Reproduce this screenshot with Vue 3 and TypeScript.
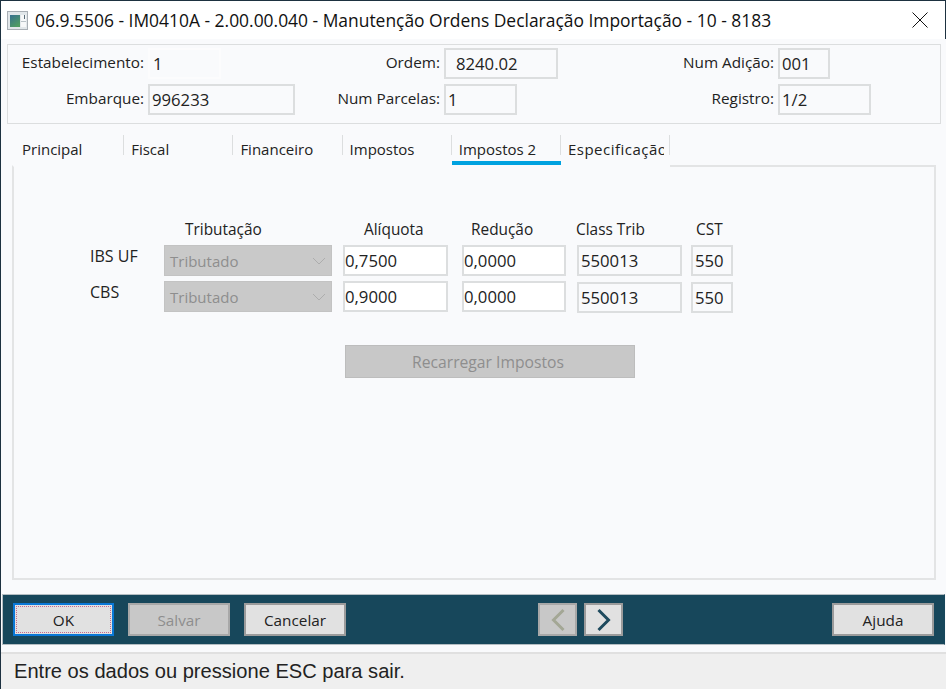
<script setup lang="ts">
interface HeaderField { label: string; value: string; width: number; cls?: string }
const headerFields: HeaderField[] = [
  { label: 'Estabelecimento:', value: '1', width: 73, cls: 'plain' },
  { label: 'Ordem:', value: '8240.02', width: 114, cls: 'indent' },
  { label: 'Num Adição:', value: '001', width: 52 },
  { label: 'Embarque:', value: '996233', width: 147 },
  { label: 'Num Parcelas:', value: '1', width: 73 },
  { label: 'Registro:', value: '1/2', width: 93 },
]
const tabs = ['Principal', 'Fiscal', 'Financeiro', 'Impostos', 'Impostos 2', 'Especificação']
const heads = ['Tributação', 'Alíquota', 'Redução', 'Class Trib', 'CST']
const rows = [
  { label: 'IBS UF', rate: '0,7500', red: '0,0000', cls: '550013', cst: '550' },
  { label: 'CBS', rate: '0,9000', red: '0,0000', cls: '550013', cst: '550' },
]
</script>

<template>
  <div class="window">
    <header class="titlebar">
      <svg class="appicon" width="21" height="19" viewBox="0 0 21 19">
        <defs>
          <linearGradient id="ig" x1="0" y1="0" x2="0.6" y2="1">
            <stop offset="0" stop-color="#37708f" />
            <stop offset="1" stop-color="#4f9c63" />
          </linearGradient>
        </defs>
        <rect x="0.5" y="0.5" width="20" height="18" fill="#e2e7ea" stroke="#a9afb5" />
        <rect x="3" y="4" width="10" height="12" fill="url(#ig)" />
        <rect x="14" y="4" width="5" height="12" fill="#f7f8f9" />
        <rect x="17" y="4" width="1" height="4" fill="#5a6c78" />
        <rect x="14" y="10" width="5" height="1" fill="#b9c2c7" />
      </svg>
      <span class="title">06.9.5506 - IM0410A - 2.00.00.040 - Manutenção Ordens Declaração Importação - 10 - 8183</span>
      <svg class="close" width="16" height="16" viewBox="0 0 16 16">
        <path d="M.5.5l15 15M15.500.5l-15 15" stroke="#111" stroke-width="1" fill="none" />
      </svg>
    </header>

    <section class="summary">
      <template v-for="f in headerFields" :key="f.label">
        <label class="sum-label">{{ f.label }}</label>
        <div class="box sum-box" :class="f.cls" :style="{ width: f.width + 'px' }">{{ f.value }}</div>
      </template>
    </section>

    <nav class="tabs">
      <div v-for="(t, i) in tabs" :key="t" class="tab" :class="{ active: i === 4 }">
        <span class="tab-text">{{ t }}</span>
      </div>
    </nav>

    <main class="panel">
      <div class="tax">
        <div></div>
        <div v-for="(h, i) in heads" :key="h" class="col-head" :class="'head-' + i">{{ h }}</div>
        <template v-for="(r, i) in rows" :key="r.label">
          <div class="row-label">{{ r.label }}</div>
          <div class="select">
            <span>Tributado</span>
            <svg width="14" height="8" viewBox="0 0 14 8"><path d="M1 1l6 6 6-6" stroke="#adadad" fill="none" /></svg>
          </div>
          <div class="box white rate">{{ r.rate }}</div>
          <div class="box white red">{{ r.red }}</div>
          <div class="box cls" :class="{ nudge: i === 1 }">{{ r.cls }}</div>
          <div class="box cst" :class="{ nudge: i === 1 }">{{ r.cst }}</div>
        </template>
      </div>
      <button class="reload" disabled>Recarregar Impostos</button>
    </main>

    <footer class="actions">
      <button class="btn focused"><span>OK</span></button>
      <button class="btn off">Salvar</button>
      <button class="btn">Cancelar</button>
      <div class="pager">
        <button class="btn nav off">
          <svg width="14" height="24" viewBox="0 0 14 24"><path d="M12.500 2L2.500 12l10 10" stroke="#a3a795" stroke-width="3" fill="none" /></svg>
        </button>
        <button class="btn nav">
          <svg width="14" height="24" viewBox="0 0 14 24"><path d="M1.500 2l10 10-10 10" stroke="#1e4a5e" stroke-width="3" fill="none" /></svg>
        </button>
      </div>
      <button class="btn">Ajuda</button>
    </footer>

    <div class="status">Entre os dados ou pressione ESC para sair.</div>
  </div>
</template>

<style>
html, body { margin: 0; height: 100%; background: #f9fafc; }
#app { height: 100%; }
</style>

<style scoped>
.window {
  box-sizing: border-box;
  width: 946px;
  height: 689px;
  display: flex;
  flex-direction: column;
  background: #f9fafc;
  border-top: 1px solid #1d3140;
  border-left: 1px solid #1d3140;
  font-family: "Open Sans", "Noto Sans", sans-serif;
  font-size: 15.300px;
  color: #222;
}
.titlebar {
  box-sizing: border-box;
  height: 38px;
  flex: none;
  display: flex;
  align-items: center;
  background: #fff;
  border-right: 1px solid #1d3140;
  padding: 0 17px 0 6px;
}
.appicon { flex: none; margin-right: 7px; }
.title { flex: 1; font-size: 17.430px; color: #111; white-space: nowrap; }
.close { flex: none; }
.summary {
  box-sizing: border-box;
  margin: 5px 5px 0 6px;
  height: 80px;
  flex: none;
  border: 1px solid #dcdedf;
  padding: 3px 0 0 0;
  display: grid;
  grid-template-columns: 136px 147px 141px 114px 212px 93px;
  grid-auto-rows: 31px;
  column-gap: 4px;
  row-gap: 5px;
  align-items: center;
}
.sum-label { text-align: right; white-space: nowrap; line-height: 24px; margin-top: -4px; }
.box {
  box-sizing: border-box;
  height: 31px;
  border: 2px solid #dcdedf;
  padding: 0 0 0 2px;
  font-size: 16.700px;
  line-height: 27px;
  white-space: nowrap;
  overflow: hidden;
}
.sum-box.plain { border-color: #fcfcfd; padding-left: 3px; }
.sum-box.indent { padding-left: 10px; }
.tabs {
  flex: none;
  height: 41px;
  margin: 0 0 0 14px;
  display: flex;
  align-items: flex-end;
}
.tab {
  box-sizing: border-box;
  width: 109.200px;
  height: 30px;
  padding-left: 7px;
  position: relative;
  overflow: hidden;
  white-space: nowrap;
  font-size: 15px;
  line-height: 28px;
}
.tab::after {
  content: "";
  position: absolute;
  right: 0;
  top: 0;
  width: 1px;
  height: 20px;
  background: #dcdedf;
}
.tab-text { display: block; width: 96px; overflow: hidden; }
.tab:last-child .tab-text { letter-spacing: 0.5px; }
.tab.active::before {
  content: "";
  position: absolute;
  left: 0;
  right: 0;
  bottom: 0;
  height: 4px;
  background: #00a2e0;
}
.panel {
  flex: none;
  box-sizing: border-box;
  height: 415px;
  margin: 0 10px 0 11px;
  border: 2px solid #e3e4e5;
  border-top-color: transparent;
  background: #f9fafc;
  position: relative;
}
.panel::before {
  content: "";
  position: absolute;
  left: 656px;
  right: -2px;
  top: -2px;
  height: 2px;
  background: #e3e4e5;
}
.tax {
  margin: 51px 0 0 76px;
  display: grid;
  grid-template-columns: 74px 179px 119px 115px 114px 42px;
  grid-template-rows: 22px 31px 31px;
  row-gap: 5px;
  align-items: start;
}
.col-head { font-size: 15.400px; line-height: 24px; white-space: nowrap; }
.head-0 { padding-left: 21px; }
.head-1 { padding-left: 21px; }
.head-2 { padding-left: 9px; }
.head-3 { margin-left: -1px; }
.head-4 { padding-left: 5px; }
.row-label { font-size: 16px; line-height: 22px; }
.select {
  box-sizing: border-box;
  width: 168px;
  height: 31px;
  background: #c9c9c9;
  border: 1px solid #c3c3c3;
  color: #8e8e8e;
  padding: 0 5px;
  display: flex;
  align-items: center;
  justify-content: space-between;
  font-size: 15px;
}
.white { background: #fff; }
.rate { width: 105px; padding-left: 0; }
.red { width: 104px; padding-left: 0; }
.cls { width: 105px; }
.cst { width: 42px; }
.nudge { margin-top: 1px; }
.reload {
  display: block;
  box-sizing: border-box;
  width: 290px;
  height: 33px;
  margin: 33px 0 0 331px;
  background: #c8c8c8;
  border: 1px solid #bdbdbd;
  color: #8e8e8e;
  font: inherit;
  font-size: 15.700px;
  padding: 0 4px 0 0;
}
.actions {
  flex: none;
  box-sizing: border-box;
  margin: 14px 1px 0 1px;
  height: 51px;
  background: #17475b;
  border: 1px solid #b4bdc2;
  border-right-color: #17475b;
  display: flex;
  align-items: center;
  padding: 0 10px 0 10px;
  gap: 14px;
}
.btn {
  box-sizing: border-box;
  width: 102px;
  height: 33px;
  background: #e1e1e1;
  border: 2px solid #9b9b9b;
  color: #222;
  font: inherit;
  font-size: 15.300px;
  padding: 0;
  flex: none;
  display: flex;
  align-items: center;
  justify-content: center;
}
.btn.off { background: #c8c8c8; color: #8e8e8e; border-color: #a8a8a8; }
.btn.focused { width: 101px; border-color: #0a78d7; padding: 1px; }
.btn.focused span {
  box-sizing: border-box;
  width: 100%;
  height: 100%;
  border: 1px dotted #c56a8c;
  display: flex;
  align-items: center;
  justify-content: center;
}
.pager { margin-left: 178px; margin-right: 195px; display: flex; gap: 7px; }
.btn.nav { width: 39px; }
.status {
  flex: none;
  box-sizing: border-box;
  margin-top: 7px;
  height: 38px;
  border-top: 2px solid #e0e0e0;
  background: #efefef;
  padding-left: 13px;
  font-family: "Liberation Sans", Arial, sans-serif;
  font-size: 20.100px;
  line-height: 35px;
  color: #222;
}
</style>
